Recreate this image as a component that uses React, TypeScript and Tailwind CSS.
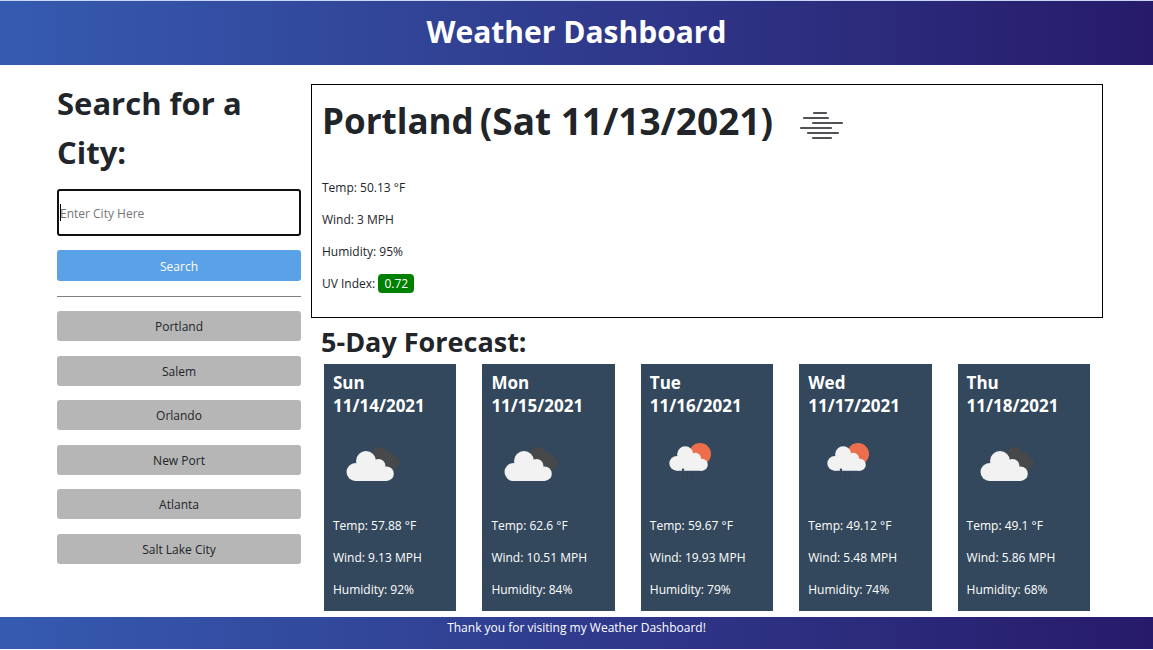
import React from "react";

type Sky = "cloudy" | "rain";

interface Day {
  name: string;
  date: string;
  sky: Sky;
  temp: string;
  wind: string;
  humidity: string;
}

const cities = ["Portland", "Salem", "Orlando", "New Port", "Atlanta", "Salt Lake City"];

const days: Day[] = [
  { name: "Sun", date: "11/14/2021", sky: "cloudy", temp: "57.88", wind: "9.13", humidity: "92" },
  { name: "Mon", date: "11/15/2021", sky: "cloudy", temp: "62.6", wind: "10.51", humidity: "84" },
  { name: "Tue", date: "11/16/2021", sky: "rain", temp: "59.67", wind: "19.93", humidity: "79" },
  { name: "Wed", date: "11/17/2021", sky: "rain", temp: "49.12", wind: "5.48", humidity: "74" },
  { name: "Thu", date: "11/18/2021", sky: "cloudy", temp: "49.1", wind: "5.86", humidity: "68" },
];

function MistIcon() {
  return (
    <svg width="50" height="36" viewBox="0 0 50 36" stroke="#525256" strokeWidth="2.200" strokeLinecap="round" aria-hidden="true">
      <path d="M17 5h12M7 10h24M16 15h29M4 20h30M11 25h30M16 30h18" />
    </svg>
  );
}

function Cloud() {
  return (
    <g fill="#f2f2f2">
      <circle cx="22.500" cy="49" r="9" />
      <circle cx="33" cy="38" r="10" />
      <circle cx="45.500" cy="43" r="7" />
      <circle cx="53.500" cy="50.700" r="7.300" />
      <path d="M22 58V44L30 40H42L50 44L54 50V58Z" />
    </g>
  );
}

function CloudyIcon() {
  return (
    <svg width="100" height="80" viewBox="0 0 100 80" aria-hidden="true">
      <path d="M39 28Q45 22 51 25L55 29Q59 29 61 33Q66 35 67 39Q67 43 61 47H49Z" fill="#484848" opacity="0.9" />
      <Cloud />
    </svg>
  );
}

function RainIcon() {
  return (
    <svg width="100" height="80" viewBox="0 0 100 80" aria-hidden="true">
      <circle cx="50" cy="31" r="11" fill="#ec6e4c" />
      <g transform="translate(8.400 0.600) scale(0.8125)">
        <Cloud />
      </g>
      <circle cx="33" cy="46.800" r="1.200" fill="#33404c" />
      <path d="M33 49l-1 3M38 50l-1 3M43 49l-1 3M37 56l-1 2M42 56l-1 2" stroke="#36444f" strokeWidth="1.500" strokeLinecap="round" />
    </svg>
  );
}

function DayCard({ day }: { day: Day }) {
  return (
    <article className="bg-[#33485c] px-[9px] pt-[7px] pb-[5px] text-white">
      <h3 className="text-[17px] leading-[23px] font-bold">
        {day.name}
        <br />
        {day.date}
      </h3>
      <div className="h-[93px] pt-[6px]">{day.sky === "cloudy" ? <CloudyIcon /> : <RainIcon />}</div>
      <div className="leading-8">
        <p>Temp: {day.temp} °F</p>
        <p>Wind: {day.wind} MPH</p>
        <p>Humidity: {day.humidity}%</p>
      </div>
    </article>
  );
}

export default function App() {
  return (
    <div className="bg-white font-['Open_Sans','Noto_Sans',sans-serif] text-[12px] text-[#212529]">
      <header className="border-t border-[#c9d8f2] bg-linear-to-r from-[#355bb0] to-[#271a6b] pt-[7px] pb-[9px] text-center">
        <h1 className="text-[30px] leading-[48px] font-bold text-white">Weather Dashboard</h1>
      </header>

      <div className="flex gap-[10px] pr-[50px] pl-[57px]">
        <aside className="w-[244px] shrink-0 pt-[14px]">
          <form onSubmit={(e) => e.preventDefault()}>
            <h2 className="text-[31px] leading-[49px] font-bold">
              <label htmlFor="city">Search for a City:</label>
            </h2>
            <div className="relative mt-3">
              <input
                id="city"
                type="text"
                placeholder="Enter City Here"
                className="block h-[47px] w-full rounded-[3px] border-2 border-[#101010] px-[1px] pt-px caret-transparent outline-none placeholder:text-[#757575]"
              />
              <span aria-hidden="true" className="absolute top-[15px] left-[3px] h-[17px] w-px bg-black" />
            </div>
            <button type="submit" className="mt-[14px] h-[31px] w-full rounded-[3px] bg-[#5aa1e8] pt-[2px] text-white">
              Search
            </button>
          </form>
          <hr className="mt-[15px] mb-[14px] border-[#808080]" />
          <div className="flex h-[253px] flex-col justify-between">
            {cities.map((city) => (
              <button key={city} type="button" className="h-[30px] w-full rounded-[3px] bg-[#b6b6b6] pt-[2px]">
                {city}
              </button>
            ))}
          </div>
        </aside>

        <main className="min-w-0 flex-1 pt-[19px]">
          <section className="border border-black px-[10px] pt-[9px] pb-[17px]">
            <div className="flex items-center">
              <h2 className="flex gap-[6px] leading-[54px] font-bold whitespace-nowrap">
                <span className="text-[35px]">Portland</span>
                <span className="text-[37px]">(Sat 11/13/2021)</span>
              </h2>
              <div className="ml-6 pt-[9px]">
                <MistIcon />
              </div>
            </div>
            <div className="mt-6 leading-8">
              <p>Temp: 50.13 °F</p>
              <p>Wind: 3 MPH</p>
              <p>Humidity: 95%</p>
              <p>
                UV Index: <span className="rounded-[4px] bg-[#008000] px-[6px] py-[1px] text-white">0.72</span>
              </p>
            </div>
          </section>

          <section>
            <h2 className="mt-[3px] px-[10px] pb-px text-[27px] leading-[42px] font-bold">5-Day Forecast:</h2>
            <div className="mx-[13px] grid grid-cols-5 gap-[26px]">
              {days.map((day) => (
                <DayCard key={day.name} day={day} />
              ))}
            </div>
          </section>
        </main>
      </div>

      <footer className="mt-[6px] bg-linear-to-r from-[#355bb0] to-[#271a6b] pb-[10px] text-center leading-[22px] text-white">
        Thank you for visiting my Weather Dashboard!
      </footer>
    </div>
  );
}
